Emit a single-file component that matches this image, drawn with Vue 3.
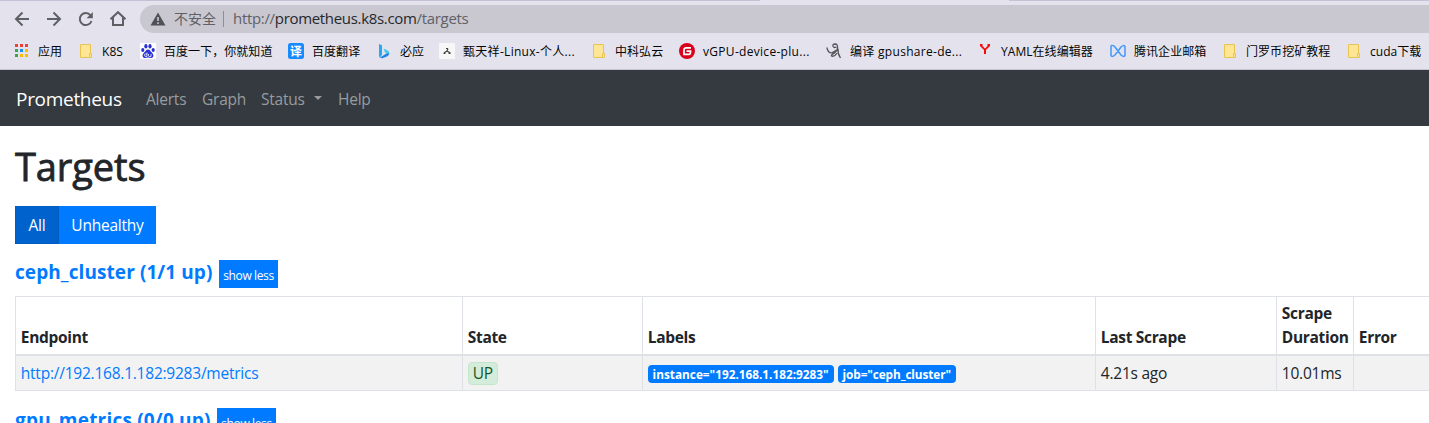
<script setup>
const bookmarks = [
  { icon: 'apps', text: '应用' },
  { icon: 'folder', text: 'K8S' },
  { icon: 'baidu', text: '百度一下，你就知道' },
  { icon: 'translate', text: '百度翻译' },
  { icon: 'bing', text: '必应' },
  { icon: 'figure', text: '甄天祥-Linux-个人...', wide: true },
  { icon: 'folder', text: '中科弘云' },
  { icon: 'gitee', text: 'vGPU-device-plu...', wide: true },
  { icon: 'scribble', text: '编译 gpushare-de...', wide: true },
  { icon: 'yaml', text: 'YAML在线编辑器' },
  { icon: 'mail', text: '腾讯企业邮箱' },
  { icon: 'folder', text: '门罗币挖矿教程' },
  { icon: 'folder', text: 'cuda下载' },
]
const dots = ['#ea4335', '#ea4335', '#ea4335', '#34a853', '#1a90ff', '#fbbc05', '#34a853', '#fbbc05', '#fbbc05']
</script>

<template>
  <div class="window">
    <div class="tabstrip"><i class="tab-left"></i><i class="tab-right"></i></div>
    <div class="toolbar">
      <svg class="nav-icons" width="140" height="28" viewBox="0 0 140 28" fill="none" stroke="#5f6065" stroke-width="2">
        <path d="M29 14H16.5M22.5 7.5L16 14l6.500 6.500" />
        <path d="M47 14h12.500M53.500 7.500L60 14l-6.500 6.500" />
        <path d="M90.500 10.300A6 6 0 1 0 91.500 16" />
        <path d="M92.800 7v6.200h-6.200z" fill="#5f6065" stroke="none" />
        <path d="M110.500 14.200L118 7.200l7.500 7M113 12.500V20h10v-7.500" />
      </svg>
      <div class="omnibox">
        <svg class="warn" width="16" height="14" viewBox="0 0 16 14">
          <path d="M8 .5L15.500 13.500H.5z" fill="#4f5156" />
          <path d="M8 5v4M8 10.200v1.800" stroke="#c9c8d1" stroke-width="1.600" />
        </svg>
        <span class="insecure">不安全</span><i class="sep"></i>
        <span class="url">http://<b>prometheus.k8s.com</b>/targets</span>
      </div>
    </div>
    <div class="bookmarks">
      <div v-for="(b, i) in bookmarks" :key="i" class="bookmark">
        <svg width="16" height="16" viewBox="0 0 16 16">
          <template v-if="b.icon === 'apps'">
            <rect v-for="(c, k) in dots" :key="k" :x="1 + (k % 3) * 5" :y="1 + Math.floor(k / 3) * 5" width="3" height="3" :fill="c" />
          </template>
          <template v-else-if="b.icon === 'folder'">
            <path d="M2.500 1.500h10v9h1v4H2.500z" fill="#ffe694" stroke="#e9c452" />
            <path d="M11.500 14v-3.500h1" fill="none" stroke="#e9c452" />
          </template>
          <template v-else-if="b.icon === 'baidu'">
            <rect width="16" height="16" rx="1" fill="#fff" />
            <g fill="#2932d5">
              <ellipse cx="2.800" cy="7" rx="1.600" ry="2.100" />
              <ellipse cx="5.900" cy="3.200" rx="1.600" ry="2.200" />
              <ellipse cx="10" cy="3.200" rx="1.600" ry="2.200" />
              <ellipse cx="13.200" cy="7" rx="1.600" ry="2.100" />
              <path d="M8 6.500c2 0 2.500 2 4 3.200 1.800 1.500 2.200 5-.8 5.300-1.200.1-2-.4-3.200-.4s-2 .5-3.200.4c-3-.3-2.600-3.800-.8-5.300C5.500 8.500 6 6.500 8 6.500z" />
            </g>
            <path d="M7 9.500v4M7 11H5.500q-1 0-1 1.200t1 1.200H7M8.500 11v1.500q0 1 1 1H11V11" fill="none" stroke="#fff" stroke-width=".8" />
          </template>
          <template v-else-if="b.icon === 'translate'">
            <rect width="16" height="16" rx="2.500" fill="#168aff" />
            <text x="8" y="12.500" text-anchor="middle" class="glyph">译</text>
          </template>
          <template v-else-if="b.icon === 'bing'">
            <path d="M3 1l3 1.200v9.300L4 14.500Q3 14 3 13z" fill="#24a9f2" />
            <path d="M12.800 8.800q1.200 3.200-1.800 4.600l-4 1.600q-2 .6-3-.5l6-3.800z" fill="#2184e8" />
            <path d="M7.500 5.500l3.800 1.700q2.200 1.100 2.200 3.500-.8-.6-2-.3l-2.500-1z" fill="#43cce7" />
          </template>
          <template v-else-if="b.icon === 'figure'">
            <rect width="16" height="16" fill="#f7f7f7" />
            <path d="M7 5.500h2M9 5.500L8 8l-3 2M8 8l3.500 2M4.500 10.300H6.500M9.500 10.300h2" fill="none" stroke="#444" stroke-width="1.200" />
          </template>
          <template v-else-if="b.icon === 'gitee'">
            <circle cx="8" cy="8" r="8" fill="#d9001b" />
            <path d="M12 4.800H7.300Q5 4.800 5 7v4.300h4.800q1.700 0 1.700-1.700V8.200H7.500" fill="none" stroke="#fff" stroke-width="1.700" />
          </template>
          <template v-else-if="b.icon === 'scribble'">
            <path d="M.8 4.500Q2.500 10.800 6 9.800L11.500 6.500M11.500 5Q12 1 9 1 6.300 1.200 7 3.300 8 5.200 10.500 4M11.500 5q-.5 4-5 6.200-2 1.300-.5 2 2.800.5 5-3.200M12 5.500q-.5 5 2.500 9.500" fill="none" stroke="#55565a" stroke-width="1.300" />
          </template>
          <template v-else-if="b.icon === 'yaml'">
            <path d="M3 1h2.500v2L8 5.500 10.500 3V1H13v2L9 7v4H7V7L3 3z" fill="#f20c0c" />
          </template>
          <template v-else>
            <path d="M1 3.500Q1 2 2.500 2.500q1.500 0 2.500 1.500l6 8q2.500 2.500 4 .5v-9q-1.500-2-4 .5l-6 8q-2.500 2.500-4 .5z" fill="none" stroke="#4398fa" stroke-width="1.500" />
          </template>
        </svg>
        <span :class="{ wide: b.wide }">{{ b.text }}</span>
      </div>
    </div>

    <nav class="navbar">
      <a class="brand">Prometheus</a>
      <a class="alerts">Alerts</a><a class="graph">Graph</a><a class="status">Status<i class="caret"></i></a><a>Help</a>
    </nav>

    <main>
      <h1>Targets</h1>
      <div class="group"><button class="all">All</button><button class="unhealthy">Unhealthy</button></div>
      <div class="pool"><h3 class="ceph">ceph_cluster (1/1 up)</h3><button class="less">show less</button></div>
      <table>
        <colgroup><col class="c1" /><col class="c2" /><col class="c3" /><col class="c4" /><col class="c5" /><col class="c6" /></colgroup>
        <thead>
          <tr><th>Endpoint</th><th>State</th><th>Labels</th><th>Last Scrape</th><th>Scrape Duration</th><th>Error</th></tr>
        </thead>
        <tbody>
          <tr>
            <td><a class="endpoint">http://192.168.1.182:9283/metrics</a></td>
            <td><span class="up">UP</span></td>
            <td><div class="labels"><span class="badge inst">instance="192.168.1.182:9283"</span><span class="badge job">job="ceph_cluster"</span></div></td>
            <td>4.21s ago</td><td>10.01ms</td><td></td>
          </tr>
        </tbody>
      </table>
      <div class="pool second"><h3 class="gpu">gpu_metrics (0/0 up)</h3><button class="less">show less</button></div>
    </main>
  </div>
</template>

<style>
body { margin: 0; overflow: hidden; }
</style>

<style scoped>
* { box-sizing: border-box; }
.window { width: 1429px; height: 423px; overflow: hidden; background: #fff; color: #212529; font: 15.5px/24px "Open Sans", "Noto Sans", "Noto Sans CJK SC", sans-serif; letter-spacing: -.23px; }
i { font-style: normal; }
.tabstrip { display: flex; justify-content: space-between; height: 5px; background: #e4e3ed; }
.tab-left { width: 760px; height: 1px; background: #c5c1d7; }
.tab-right { width: 420px; height: 1px; background: #c5c1d7; }
.toolbar { display: flex; height: 28px; background: #e4e3ed; }
.nav-icons { flex: none; }
.omnibox { flex: none; display: flex; align-items: center; width: 1310px; height: 28px; padding-left: 10px; border-radius: 14px; background: #c9c8d1; }
.warn { flex: none; }
.insecure { width: 43px; margin-left: 8px; padding-bottom: 2px; font: 14px/20px "Noto Sans CJK SC", sans-serif; letter-spacing: 0; color: #5f6065; white-space: nowrap; }
.sep { width: 1px; height: 16px; margin: 0 9px 0 6px; background: #8e8e96; }
.url { padding-bottom: 2px; font-size: 15px; letter-spacing: -.32px; color: #606167; white-space: nowrap; }
.url b { font-weight: 400; color: #26272b; }
.bookmarks { display: grid; grid-template-columns: 64px 62px 148px 88px 63px 152px 88px 147px 151px 133px 112px 124px 83px; align-items: center; height: 37px; padding-left: 14px; border-bottom: 1px solid #c6c5cd; background: #e4e3ed; font: 12px/18px "Open Sans", "Noto Sans CJK SC", sans-serif; letter-spacing: .05px; color: #050505; white-space: nowrap; }
.bookmark { display: flex; align-items: center; gap: 8px; }
.bookmark svg { flex: none; }
.bookmark span { padding-top: 2px; }
.bookmark .wide { letter-spacing: .3px; }
.glyph { font: 700 12px "Noto Sans CJK SC", sans-serif; fill: #fff; }
.navbar { display: flex; align-items: center; height: 56px; padding: 1px 16px 0; background: #343a40; color: #999c9f; }
.navbar a { margin-right: 16px; padding-top: 1px; white-space: nowrap; }
.navbar .brand { width: 106px; margin-right: 24px; padding-top: 0; font-size: 19px; letter-spacing: -.3px; color: #fff; }
.navbar .alerts { width: 40px; }
.navbar .graph { width: 43px; }
.navbar .status { display: flex; align-items: center; justify-content: space-between; width: 61px; }
.caret { margin-bottom: 2px; border: 4.800px solid transparent; border-top-color: #999c9f; border-bottom: 0; }
main { padding: 16px 15px 0; }
h1 { height: 48px; margin: 0 0 16px; font-size: 38px; line-height: 48px; font-weight: 500; letter-spacing: -.1px; -webkit-text-stroke: .8px #212529; }
button { padding: 0; border: 0; font: inherit; letter-spacing: inherit; color: #fff; background: #007bff; white-space: nowrap; }
.group { display: flex; height: 38px; }
.all { width: 44px; background: #0062cc; border: 1px solid #005cbf; }
.unhealthy { width: 97px; }
.pool { display: flex; align-items: flex-start; height: 28px; margin-top: 16px; }
h3 { margin: 0; font-size: 19px; line-height: 24px; font-weight: 700; letter-spacing: .08px; color: #007bff; white-space: nowrap; }
.ceph { width: 204px; }
.gpu { width: 202px; letter-spacing: .2px; }
.less { width: 59px; height: 28px; padding-top: 3px; font-size: 12px; letter-spacing: -.38px; }
table { width: 1501px; margin-top: 8px; border-collapse: collapse; table-layout: fixed; }
.c1 { width: 447px; } .c2 { width: 180px; } .c3 { width: 453px; } .c4 { width: 181px; } .c5 { width: 77px; } .c6 { width: 163px; }
th, td { border: 1px solid #dee2e6; padding: 4.800px; text-align: left; vertical-align: bottom; }
th { padding: 4.400px 4.800px; border-bottom-width: 2px; font-weight: 700; letter-spacing: -.32px; }
td { height: 36px; vertical-align: top; background: #f2f2f2; white-space: nowrap; }
.endpoint { color: #007bff; }
.up { display: block; width: 30px; height: 23px; margin-top: 1px; line-height: 21px; text-align: center; color: #155724; background: #d4edda; border: 1px solid #c3e6cb; border-radius: 4px; }
.labels { display: flex; gap: 4px; padding-top: 4px; }
.badge { height: 18px; line-height: 18px; padding: 0 4.800px; border-radius: 4px; background: #007bff; color: #fff; font-size: 11.800px; font-weight: 700; letter-spacing: 0; white-space: nowrap; }
.inst { width: 186px; }
.job { width: 118px; letter-spacing: -.1px; }
.second { margin-top: 17px; }
</style>
